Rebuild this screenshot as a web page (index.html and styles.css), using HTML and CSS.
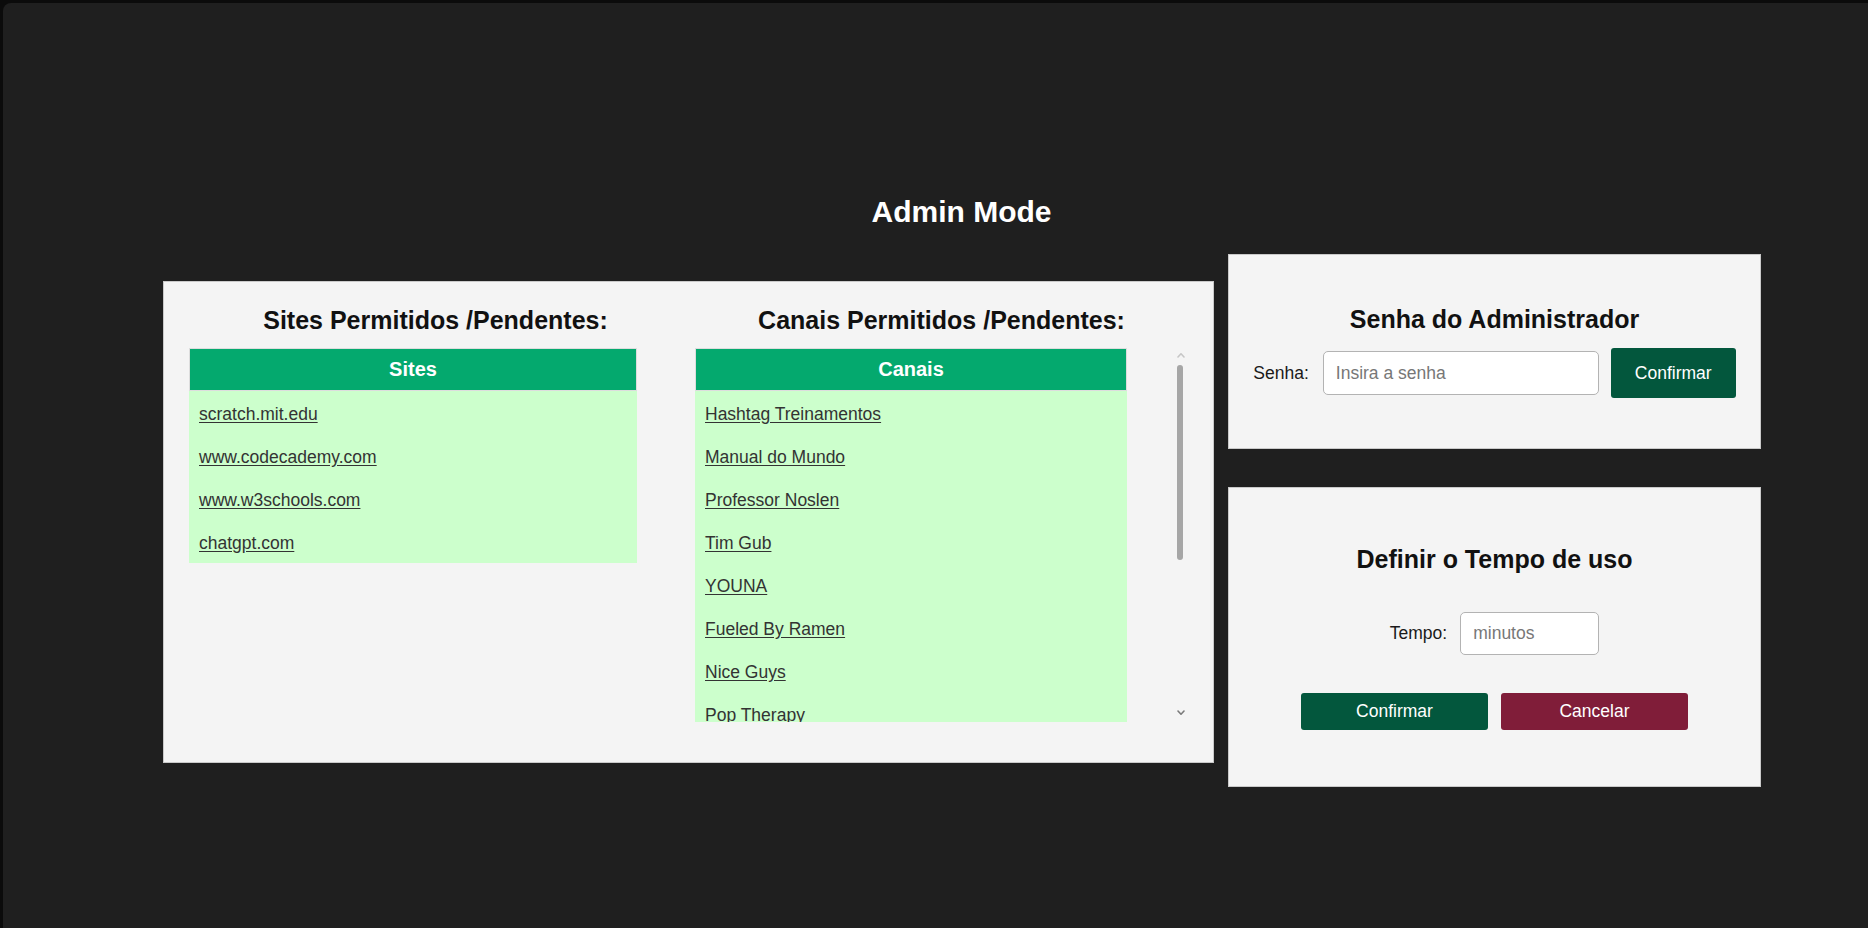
FILE: index.html
```html
<!DOCTYPE html>
<html lang="pt-BR">
<head>
<meta charset="utf-8">
<title>Admin Mode</title>
<link rel="stylesheet" href="styles.css">
</head>
<body>
<div class="frame">
  <h1 class="page-title">Admin Mode</h1>
  <main class="layout">
    <section class="card lists-card">
      <div class="list-col">
        <h2 class="card-title">Sites Permitidos /Pendentes:</h2>
        <table class="list-table sites-table">
          <thead><tr><th>Sites</th></tr></thead>
          <tbody>
            <tr><td><a href="#">scratch.mit.edu</a></td></tr>
            <tr><td><a href="#">www.codecademy.com</a></td></tr>
            <tr><td><a href="#">www.w3schools.com</a></td></tr>
            <tr><td><a href="#">chatgpt.com</a></td></tr>
          </tbody>
        </table>
      </div>
      <div class="list-col">
        <h2 class="card-title">Canais Permitidos /Pendentes:</h2>
        <div class="scroll-wrap">
          <div class="scroll-box">
            <table class="list-table canais-table">
              <thead><tr><th>Canais</th></tr></thead>
              <tbody>
                <tr><td><a href="#">Hashtag Treinamentos</a></td></tr>
                <tr><td><a href="#">Manual do Mundo</a></td></tr>
                <tr><td><a href="#">Professor Noslen</a></td></tr>
                <tr><td><a href="#">Tim Gub</a></td></tr>
                <tr><td><a href="#">YOUNA</a></td></tr>
                <tr><td><a href="#">Fueled By Ramen</a></td></tr>
                <tr><td><a href="#">Nice Guys</a></td></tr>
                <tr><td><a href="#">Pop Therapy</a></td></tr>
              </tbody>
            </table>
          </div>
          <div class="scrollbar" aria-hidden="true">
            <div class="sb-btn sb-up">
              <svg width="8" height="6" viewBox="0 0 8 6"><path d="M1 5 L4 1.8 L7 5" fill="none" stroke-width="1.6" stroke-linecap="round" stroke-linejoin="round"/></svg>
            </div>
            <div class="sb-track"><div class="sb-thumb"></div></div>
            <div class="sb-btn sb-down">
              <svg width="8" height="6" viewBox="0 0 8 6"><path d="M1 1 L4 4.2 L7 1" fill="none" stroke-width="1.6" stroke-linecap="round" stroke-linejoin="round"/></svg>
            </div>
          </div>
        </div>
      </div>
    </section>
    <div class="side">
      <section class="card side-card pass-card">
        <h2 class="card-title">Senha do Administrador</h2>
        <div class="form-row">
          <label class="field-label label-senha" for="senha">Senha:</label>
          <input class="text-input input-senha" id="senha" type="password" placeholder="Insira a senha">
          <button class="btn btn-green btn-pass" type="button">Confirmar</button>
        </div>
      </section>
      <section class="card side-card time-card">
        <h2 class="card-title">Definir o Tempo de uso</h2>
        <div class="form-row">
          <label class="field-label label-tempo" for="tempo">Tempo:</label>
          <input class="text-input input-tempo" id="tempo" type="text" placeholder="minutos">
        </div>
        <div class="btn-row">
          <button class="btn btn-green btn-wide" type="button">Confirmar</button>
          <button class="btn btn-red btn-wide" type="button">Cancelar</button>
        </div>
      </section>
    </div>
  </main>
</div>
</body>
</html>
```
FILE: styles.css
```css
html, body {
  margin: 0;
  padding: 0;
}

body {
  background: #0b0b0b;
  font-family: "Liberation Sans", Arial, sans-serif;
  color: #111;
  overflow: hidden;
}

.frame {
  margin: 3px 0 0 3px;
  height: 925px;
  background: #1f1f1f;
  border-top-left-radius: 8px;
  box-sizing: border-box;
}

.page-title {
  margin: 0;
  padding: 192px 0 0 52px;
  text-align: center;
  color: #ffffff;
  font-size: 30px;
  line-height: 34px;
  font-weight: 700;
}

.layout {
  display: flex;
  align-items: flex-start;
  gap: 14px;
  margin-top: 25px;
  padding-left: 160px;
}

.card {
  background: #f4f4f4;
  border: 1px solid #c9c9c9;
  box-sizing: border-box;
}

.card-title {
  margin: 0;
  font-size: 25px;
  line-height: 29px;
  font-weight: 700;
  color: #111;
  text-align: center;
}

/* Lists card */
.lists-card {
  width: 1051px;
  margin-top: 27px;
  padding: 24px 25px 40px;
  display: flex;
  gap: 13px;
}

.list-col {
  width: 493px;
  flex: none;
}

.list-col .card-title {
  margin-bottom: 13px;
}

.list-table {
  border-collapse: separate;
  border-spacing: 0;
  table-layout: fixed;
}

.sites-table { width: 448px; }
.canais-table { width: 432px; }

.list-table th {
  padding: 0;
  border: 1px solid #dddddd;
  background: #04a96e;
  color: #ffffff;
  font-size: 20px;
  font-weight: 700;
  line-height: 41px;
  text-align: center;
}

.list-table td {
  padding: 4px 10px 0;
  background: #ccffcc;
  font-size: 17.5px;
  line-height: 39px;
  text-align: left;
}

.list-table a {
  color: #333333;
  text-decoration: underline;
  text-underline-offset: 2px;
}

/* Canais list with its scrollbar */
.scroll-wrap {
  display: flex;
  width: 493px;
  height: 374px;
}

.scroll-box {
  width: 478px;
  height: 374px;
  overflow: hidden;
}

.scrollbar {
  width: 15px;
  height: 374px;
  display: flex;
  flex-direction: column;
}

.sb-btn {
  height: 14px;
  display: flex;
  justify-content: center;
}

.sb-btn svg {
  display: block;
}

.sb-up {
  align-items: center;
  stroke: #c6c6c6;
}

.sb-down {
  align-items: flex-start;
  padding-top: 2px;
  box-sizing: border-box;
  stroke: #7a7a7a;
}

.sb-track {
  flex: 1;
  padding-top: 3px;
}

.sb-thumb {
  width: 6px;
  height: 195px;
  margin-left: 4px;
  border-radius: 3px;
  background: #a6a6a6;
}

/* Side cards */
.side {
  width: 533px;
  flex: none;
  display: flex;
  flex-direction: column;
  gap: 38px;
}

.side-card {
  width: 533px;
}

.pass-card {
  padding: 50px 0 50px;
}

.pass-card .card-title {
  margin-bottom: 14px;
}

.time-card {
  padding: 57px 0 56px;
}

.time-card .card-title {
  margin-bottom: 38px;
}

.form-row {
  display: flex;
  align-items: center;
  justify-content: center;
}

.field-label {
  font-size: 17.5px;
  color: #1a1a1a;
}

.label-senha { margin-right: 14px; }
.label-tempo { margin-right: 13px; }

.text-input {
  box-sizing: border-box;
  border: 1px solid #b3b3b3;
  border-radius: 5px;
  background: #ffffff;
  padding: 0 12px;
  font-family: "Liberation Sans", Arial, sans-serif;
  font-size: 17.5px;
  color: #222;
  outline: none;
}

.text-input::placeholder {
  color: #777777;
}

.input-senha {
  width: 276px;
  height: 44px;
  margin-right: 12px;
}

.input-tempo {
  width: 139px;
  height: 43px;
}

.btn {
  border: none;
  border-radius: 3px;
  color: #ffffff;
  font-family: "Liberation Sans", Arial, sans-serif;
  font-size: 17.5px;
  cursor: pointer;
}

.btn-green { background: #03573d; }
.btn-red { background: #801d39; }

.btn-pass {
  height: 50px;
  padding: 0 24px;
}

.btn-row {
  display: flex;
  justify-content: center;
  gap: 13px;
  margin-top: 38px;
}

.btn-wide {
  width: 187px;
  height: 37px;
  padding: 0;
}
```
